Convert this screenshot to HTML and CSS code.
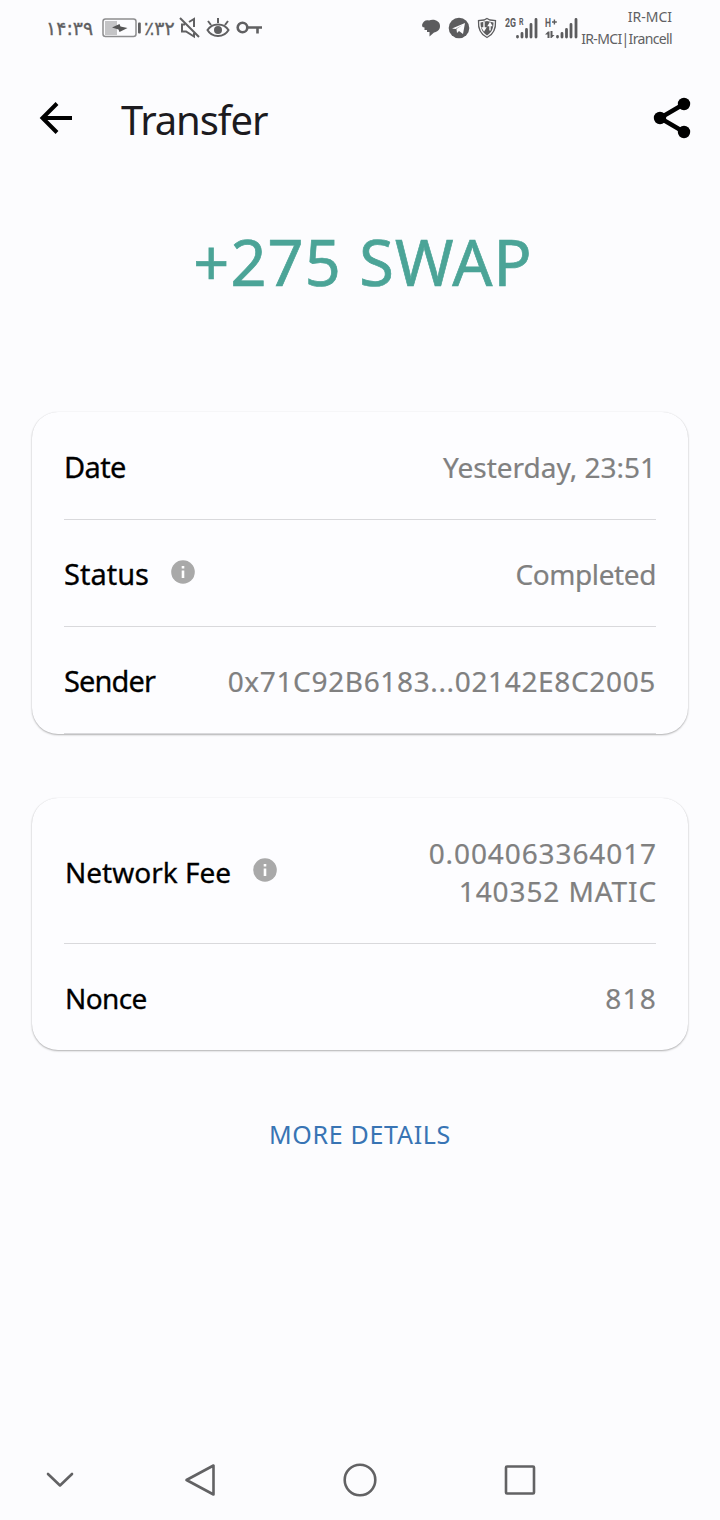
FILE: index.html
```html
<!doctype html>
<html lang="en">

<head>
	<meta charset="utf-8">
	<title>Transfer</title>
	<link rel="stylesheet" href="styles.css">
</head>

<body>

	<div class="status-bar">
		<div class="status-left">
			<span class="clock">۱۴:۳۹</span>
			<svg class="battery" width="40" height="20" viewBox="0 0 40 20">
				<rect x="3" y="3" width="12" height="14" fill="#c4c4c6"/>
				<rect x="1" y="1" width="33" height="17.5" rx="2.5" fill="none" stroke="#8d8d8f" stroke-width="1.5"/>
				<path d="M10 9.500 17.500 6l1 2.500 7 1.500-8 4-1-2.500z" fill="#555"/>
				<rect x="36" y="4.500" width="2.800" height="11" rx="1" fill="#606062"/>
			</svg>
			<span class="percent">٪۳۲</span>
			<svg class="mute" width="22" height="22" viewBox="0 0 22 22" fill="none" stroke="#606062" stroke-width="2">
				<path d="M1 1l19 19M6 7.500H3v7h4l8 5V16M10 5l5-3v8"/>
			</svg>
			<svg class="eye" width="24" height="22" viewBox="0 0 24 22" fill="none" stroke="#606062" stroke-width="2">
				<path d="M1.500 13C6 5.500 18 5.500 22.500 13 18 21 6 21 1.500 13z"/>
				<circle cx="12" cy="13" r="4" fill="#606062" stroke="none"/>
				<path d="M12 1v5M2 4l3 4M22 4l-3 4"/>
			</svg>
			<svg class="key" width="27" height="16" viewBox="0 0 27 16" fill="none" stroke="#606062" stroke-width="2.600">
				<circle cx="6.500" cy="7.500" r="4.800"/>
				<path d="M11.500 7.500H26M21.500 7.500v6"/>
			</svg>
		</div>

		<div class="status-right">
			<svg class="chat" width="20" height="20" viewBox="0 0 20 20" fill="#5c5c5e">
				<path d="M1 7C2 3 5 1.500 8 2.500c5-2 11 .5 11 5.500 0 4-3 6-6 6.500L8.500 18.500V14H6v-2H3.500V9.500L1.500 9z"/>
			</svg>
			<svg class="telegram" width="22" height="22" viewBox="0 0 22 22">
				<circle cx="11" cy="11" r="10.300" fill="#5c5c5e"/>
				<path d="M4 11.500 17 6l-2 11-4-3-2 2-.5-4 6-4-7 4z" fill="#fcfcfe"/>
			</svg>
			<svg class="shield" width="20" height="22" viewBox="0 0 20 22" fill="none">
				<path d="M10 1.500 13 3l5.500.5c.5 8-2 14-8.500 17C3.500 17.500 1 11.500 1.500 3.500L7 3z" stroke="#5c5c5e" stroke-width="1.300"/>
				<path d="M10 4l6.500 1.500c0 6-2 10-6.500 13-4.500-3-6.500-7-6.500-13z" fill="#5c5c5e"/>
				<path d="M7 5v8M5.500 11h3L7 13.500zM13 13.500V7M11.500 8.500h3L13 6z" stroke="#fcfcfe" stroke-width="1.400"/>
			</svg>
			<svg class="signal signal-2g" width="34" height="25" viewBox="0 0 34 25" fill="#5c5c5e">
				<text x="0" y="11" class="net" textLength="11" lengthAdjust="spacingAndGlyphs">2G</text>
				<text x="14" y="9" class="net-small" textLength="4.500" lengthAdjust="spacingAndGlyphs">R</text>
				<path class="bars" d="M12.500 20.500v.5M17 17.500V21M21.500 13.500V21M26 8.500V21M31 3.500V21"/>
			</svg>
			<svg class="signal signal-h" width="34" height="25" viewBox="0 0 34 25" fill="#5c5c5e">
				<text x="0" y="11" class="net" textLength="6" lengthAdjust="spacingAndGlyphs">H</text>
				<path d="M7 5.300h1.700V3.500h1.400v1.800h1.700v1.400h-1.700v1.800H8.700V6.700H7z"/>
				<path d="M0 18.500l3-3h1.500V22h-2v-3.500zM5.500 15h2v4h2L6.500 22h-1z"/>
				<path class="bars" d="M12.500 20.500v.5M17 17.500V21M21.500 13.500V21M26 8.500V21M31 3.500V21"/>
			</svg>
			<div class="carriers">
				<div><span class="carrier-top">IR-MCI</span></div>
				<div><span class="carrier-bottom">IR-MCI|Irancell</span></div>
			</div>
		</div>
	</div>

	<header class="app-bar">
		<svg class="back" width="34" height="34" viewBox="0 0 34 34" fill="none" stroke="#000" stroke-width="4">
			<path d="M33 17H4M18 2.500 3.500 17 18 31.500"/>
		</svg>
		<h1 class="title">Transfer</h1>
		<svg class="share" width="38" height="42" viewBox="0 0 38 42">
			<path d="M31 7 7 21l24 14" fill="none" stroke="#000" stroke-width="4.400"/>
			<circle cx="31" cy="7" r="6.200"/>
			<circle cx="7" cy="21" r="6.200"/>
			<circle cx="31" cy="35" r="6.200"/>
		</svg>
	</header>

	<main>
		<div class="amount"><span>+275 SWAP</span></div>

		<section class="card">
			<div class="row first">
				<span class="label date">Date</span>
				<span class="value yesterday">Yesterday, 23:51</span>
			</div>
			<div class="row">
				<span class="label status">Status</span>
				<svg class="info" width="24" height="24" viewBox="0 0 24 24">
					<circle cx="12" cy="12" r="11.800" fill="#a9a9a9"/>
					<path d="M10.700 6h2.600v2.400h-2.600zM10.700 10.500h2.600V18h-2.600z" fill="#fff"/>
				</svg>
				<span class="value completed">Completed</span>
			</div>
			<div class="row">
				<span class="label sender">Sender</span>
				<span class="value address">0x71C92B6183...02142E8C2005</span>
			</div>
		</section>

		<section class="card card-fee">
			<div class="row fee">
				<span class="label network">Network Fee</span>
				<svg class="info" width="24" height="24" viewBox="0 0 24 24">
					<circle cx="12" cy="12" r="11.800" fill="#a9a9a9"/>
					<path d="M10.700 6h2.600v2.400h-2.600zM10.700 10.500h2.600V18h-2.600z" fill="#fff"/>
				</svg>
				<span class="value fee-value">0.004063364017<br>140352 MATIC</span>
			</div>
			<div class="row nonce">
				<span class="label nonce-label">Nonce</span>
				<span class="value count">818</span>
			</div>
		</section>

		<div class="more"><a class="more-link">MORE DETAILS</a></div>
	</main>

	<nav class="nav-bar">
		<svg width="40" height="40" viewBox="0 0 40 40"><path d="M8 14l12 11.500L32 14"/></svg>
		<svg width="40" height="40" viewBox="0 0 40 40"><path d="M33.500 5.500v29L6.500 20z"/></svg>
		<svg width="40" height="40" viewBox="0 0 40 40"><circle cx="20" cy="20" r="15.300"/></svg>
		<svg width="40" height="40" viewBox="0 0 40 40"><rect x="6" y="6.500" width="28" height="27" rx="1"/></svg>
	</nav>

</body>
</html>
```
FILE: styles.css
```css
* {
	box-sizing: border-box;
}

body {
	margin: 0;
	width: 720px;
	height: 1520px;
	display: flex;
	flex-direction: column;
	background: #fcfcfe;
	font-family: "Noto Sans", "Open Sans", sans-serif;
	color: #000;
	overflow: hidden;
}

svg {
	display: block;
	flex: none;
}

/* system status bar */
.status-bar {
	height: 56px;
	display: flex;
	justify-content: space-between;
	padding: 0 48px 0 46px;
	color: #606062;
}

.status-left,
.status-right {
	display: flex;
	align-items: center;
}

.clock,
.percent {
	font-family: "DejaVu Sans", sans-serif;
	font-size: 19px;
	line-height: 24px;
	direction: ltr;
	unicode-bidi: bidi-override;
	white-space: nowrap;
	-webkit-text-stroke: 0.3px #606062;
}

.clock {
	width: 56px;
	letter-spacing: -1.4px;
}

.percent {
	width: 36px;
	margin-left: 2px;
	letter-spacing: -0.6px;
}

.mute {
	margin-left: -1px;
}

.eye {
	margin-left: 5px;
}

.key {
	margin-left: 6px;
}

.telegram {
	margin-left: 7px;
}

.shield {
	margin-left: 7px;
}

.signal-2g {
	margin-left: 8px;
}

.signal-h {
	margin-left: 6px;
}

.net {
	font: bold 12px "Roboto", sans-serif;
}

.net-small {
	font: bold 9px "Roboto", sans-serif;
}

.bars {
	stroke: #5c5c5e;
	stroke-width: 2.8;
	stroke-linecap: round;
}

.carriers {
	width: 93px;
	font-size: 14px;
	line-height: 22px;
	text-align: right;
	white-space: nowrap;
}

.carrier-bottom {
	letter-spacing: -0.65px;
}

/* title bar */
.app-bar {
	height: 124px;
	display: flex;
	align-items: center;
	padding: 0 29px 0 39px;
}

.title {
	flex: 1;
	margin: 4px 0 0 48px;
	font-size: 40px;
	font-weight: 400;
	line-height: 54px;
	letter-spacing: -1.1px;
	color: #1c1b1f;
}

main {
	flex: 1;
}

.amount {
	height: 232px;
	padding: 37px 0 0 6px;
	font-size: 63px;
	line-height: 90px;
	letter-spacing: 1.1px;
	text-align: center;
	color: #4ba497;
	-webkit-text-stroke: 0.7px #4ba497;
}

.card {
	margin: 0 32px 64px;
	padding: 0 32px;
	border-radius: 26px;
	background: #fdfdff;
	box-shadow: 0 1px 2px rgba(0, 0, 0, 0.3), 0 0 1px rgba(0, 0, 0, 0.1);
}

.row {
	height: 107px;
	display: flex;
	align-items: center;
	border-bottom: 1px solid #d9d9dc;
	padding-top: 2px;
}

.first {
	height: 108px;
}

.label {
	font-size: 29px;
	line-height: 38px;
	white-space: nowrap;
	-webkit-text-stroke: 0.3px #000;
}

.date {
	letter-spacing: -0.6px;
}

.sender {
	letter-spacing: -0.9px;
}

.value {
	margin-left: auto;
	font-size: 28px;
	line-height: 38px;
	text-align: right;
	color: #808080;
	white-space: nowrap;
	-webkit-text-stroke: 0.2px #808080;
}

.completed {
	letter-spacing: -0.4px;
}

.address {
	letter-spacing: 0.65px;
}

.fee-value {
	letter-spacing: 0.9px;
	margin-right: -1px;
}

.count {
	letter-spacing: 1.2px;
	margin-right: -1px;
}

.info {
	margin: -5px 0 0 22px;
}

.card-fee {
	margin-bottom: 0;
}

.fee {
	height: 146px;
}

.fee .info {
	margin-top: -4px;
}

.nonce {
	height: 106px;
	border-bottom: 0;
}

.network,
.nonce-label {
	margin-left: 1px;
	font-size: 28px;
}

.nonce-label {
	letter-spacing: -0.6px;
}

.more {
	margin-top: 67px;
	text-align: center;
	font-size: 25px;
	line-height: 34px;
	letter-spacing: 0.7px;
	color: #3874b4;
}

/* system navigation */
.nav-bar {
	height: 80px;
	display: flex;
	align-items: center;
	gap: 120px;
	padding-left: 40px;
}

.nav-bar svg {
	fill: none;
	stroke: #626264;
	stroke-width: 2.6;
	stroke-linecap: round;
	stroke-linejoin: round;
}

.nav-bar svg + svg {
	margin-left: 0;
}

.nav-bar svg:first-child {
	margin-right: -20px;
}
```
